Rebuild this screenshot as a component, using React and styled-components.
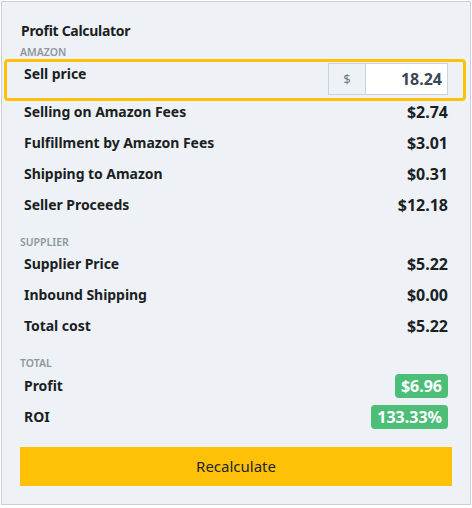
import React from 'react'
import styled, { createGlobalStyle } from 'styled-components'

const GlobalStyle = createGlobalStyle`
  body {
    margin: 0;
    background: #ffffff;
    font-family: "Noto Sans", "Open Sans", Arial, sans-serif;
    color: #1b1f24;
  }
`

const Panel = styled.div`
  box-sizing: border-box;
  width: 470px;
  height: 504px;
  margin: 1px 0 0 1px;
  border: 1px solid #c6d0d8;
  background: #eef2f6;
  padding: 19px 18px 17px 18px;
  display: flex;
  flex-direction: column;
`

const Title = styled.h1`
  margin: 0 0 0 1px;
  font-size: 14px;
  line-height: 20px;
  font-weight: 700;
  letter-spacing: -0.3px;
`

const Section = styled.div`
  margin: ${p => p.$top || 0}px 0 ${p => p.$bottom || 0}px 0;
  font-size: 10.5px;
  line-height: 14px;
  font-weight: 600;
  color: #8d979f;
  text-transform: uppercase;
`

const Row = styled.div`
  display: flex;
  justify-content: space-between;
  align-items: center;
  padding: ${p => (p.$badge ? '0 4px 7px 4px' : '1px 4px 10px 4px')};
  height: ${p => (p.$badge ? '24px' : '20px')};
`

const Label = styled.span`
  font-size: 14px;
  line-height: 20px;
  font-weight: 700;
  letter-spacing: -0.05px;
`

const Value = styled.span`
  font-size: 16px;
  line-height: 20px;
  font-weight: 700;
`

const HighlightRow = styled.div`
  display: flex;
  justify-content: space-between;
  align-items: flex-start;
  margin: 0 -14px 0 -16px;
  padding: 1px 15px 3px 17px;
  border: 3px solid #ffc107;
  border-radius: 4px;

  ${Label} {
    margin-top: 1px;
  }
`

const InputGroup = styled.div`
  display: flex;
  height: 32px;
`

const Addon = styled.span`
  box-sizing: border-box;
  width: 37px;
  display: flex;
  align-items: center;
  justify-content: center;
  border: 1px solid #c8d3dc;
  border-right: none;
  background: #eef2f6;
  color: #6f7a8c;
  font-size: 13px;
`

const PriceInput = styled.input`
  box-sizing: border-box;
  width: 83px;
  height: 32px;
  border: 1px solid #c8d3dc;
  background: #ffffff;
  padding: 0 5px 0 6px;
  text-align: right;
  font-family: inherit;
  font-size: 16px;
  font-weight: 700;
  color: #3a4757;
  outline: none;
`

const Badge = styled.span`
  background: #4cbe78;
  color: #ffffff;
  border-radius: 4px;
  padding: 0 6px;
  height: 24px;
  line-height: 24px;
  font-size: 16px;
  font-weight: 700;
`

const Button = styled.button`
  margin-top: 11px;
  height: 39px;
  width: 432px;
  border: none;
  background: #ffc107;
  color: #212529;
  font-family: inherit;
  font-size: 15px;
  cursor: pointer;
`

const amazon = [
  ['Selling on Amazon Fees', '$2.74'],
  ['Fulfillment by Amazon Fees', '$3.01'],
  ['Shipping to Amazon', '$0.31'],
  ['Seller Proceeds', '$12.18'],
]

const supplier = [
  ['Supplier Price', '$5.22'],
  ['Inbound Shipping', '$0.00'],
  ['Total cost', '$5.22'],
]

const totals = [
  ['Profit', '$6.96'],
  ['ROI', '133.33%'],
]

export default function App() {
  return (
    <>
      <GlobalStyle />
      <Panel>
        <Title>Profit Calculator</Title>
        <Section $top={3.5}>Amazon</Section>
        <HighlightRow>
          <Label>Sell price</Label>
          <InputGroup>
            <Addon>$</Addon>
            <PriceInput defaultValue="18.24" />
          </InputGroup>
        </HighlightRow>
        {amazon.map(([label, value]) => (
          <Row key={label}>
            <Label>{label}</Label>
            <Value>{value}</Value>
          </Row>
        ))}
        <Section $top={10} $bottom={4.5}>Supplier</Section>
        {supplier.map(([label, value]) => (
          <Row key={label}>
            <Label>{label}</Label>
            <Value>{value}</Value>
          </Row>
        ))}
        <Section $top={10} $bottom={3.5}>Total</Section>
        {totals.map(([label, value]) => (
          <Row key={label} $badge>
            <Label>{label}</Label>
            <Badge>{value}</Badge>
          </Row>
        ))}
        <Button>Recalculate</Button>
      </Panel>
    </>
  )
}
